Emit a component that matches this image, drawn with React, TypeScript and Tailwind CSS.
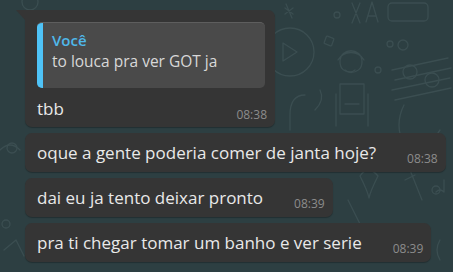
function Doodles() {
  return (
    <svg className="absolute inset-0 h-full w-full" viewBox="0 0 453 272" fill="none" stroke="#3b4e51" strokeWidth="1.3" strokeLinecap="round" strokeLinejoin="round">
      <circle cx="30" cy="2" r="8" />
      <path d="M285 8 l8 6 M293 8 l-8 6 M286 4 l6 14" />
      <circle cx="337" cy="15" r="3" />
      <path d="M352 3 l8 20 M360 3 l-8 20 M366 22 l6 -20 l6 20 M368 16 h8" />
      <rect x="388" y="3" width="40" height="18" rx="4" />
      <circle cx="290" cy="52" r="24" />
      <path d="M283 43 v18 l14 -9 z" />
      <rect x="325" y="37" width="8" height="8" rx="1" transform="rotate(20 329 41)" />
      <path d="M340 62 c0 -15 22 -15 22 0 c0 14 -22 14 -22 0 z M338 60 c6 -10 20 -10 26 0" />
      <path d="M345 70 q5 4 10 0 M336 94 v32 M368 94 v32 M340 84 h24 v30 h-24 z M345 104 h14" />
      <circle cx="390" cy="44" r="3" />
      <circle cx="403" cy="45" r="5" />
      <path d="M392 70 l56 -12 M395 80 l56 -12 M392 90 l58 -12 M395 100 l56 -12" />
      <circle cx="410" cy="72" r="7" />
      <circle cx="432" cy="80" r="7" />
      <circle cx="378" cy="70" r="3" />
      <path d="M404 105 q-10 20 0 40" />
      <path d="M305 95 q-15 0 -15 20 v15 M320 90 q5 10 -5 20" />
      <path d="M440 130 q-8 10 -2 25 M420 150 l-6 14 l10 -4" />
      <circle cx="436" cy="190" r="4" />
      <path d="M360 176 q8 -12 18 0 q-8 16 -9 22 q-1 -6 -9 -22 z M348 200 l20 40 M410 170 l12 30 M415 175 l-10 5 M444 180 v12 q-4 -4 -8 0 M0 150 q10 -10 20 0" />
      <circle cx="12" cy="148" r="5" />
      <circle cx="6" cy="224" r="4" />
      <path d="M4 250 l12 -10 l8 16 M440 240 q-6 10 0 20" />
    </svg>
  );
}

function Time({ t }: { t: string }) {
  return <span className="mb-[-3px] ml-auto shrink-0 pl-[31px] text-[12px] leading-[14px] text-[#8c8c8c]">{t}</span>;
}

function Bubble({ text, time }: { text: string; time: string }) {
  return (
    <div className="flex w-fit items-end rounded-[7px] bg-[#353535] py-[9px] pl-[12px] pr-[8px] shadow-[0_1px_1px_rgba(0,0,0,0.25)]">
      <span className="text-[17px] leading-[21px] text-[#e9e9e9]">{text}</span>
      <Time t={time} />
    </div>
  );
}

export default function App() {
  return (
    <div className="relative h-[272px] w-[453px] overflow-hidden bg-[#2d3f42]" style={{ fontFamily: '"Open Sans", "Noto Sans", sans-serif' }}>
      <Doodles />
      <div className="relative flex flex-col gap-[6px] pl-[25px] pt-[10px]">
        <div className="relative w-[250px] rounded-[7px] rounded-tl-none bg-[#353535] pb-[8px] pl-[12px] pr-[8px] pt-[12px] shadow-[0_1px_1px_rgba(0,0,0,0.25)]">
          <svg className="absolute left-[-9px] top-0" width="9" height="10" viewBox="0 0 9 10">
            <path d="M0 0 H9 V10 Z" fill="#353535" />
          </svg>
          <div className="mr-[2px] flex h-[66px] overflow-hidden rounded-[5px] border-t border-[#5e5e5e] bg-[#4a4a4a]">
            <div className="w-[6px] shrink-0 bg-[#4fc3f7]" />
            <div className="flex flex-col pl-[9px] pt-[7px]">
              <span className="text-[15px] font-semibold leading-[20px] text-[#4fb8ea]">Você</span>
              <span className="text-[15.5px] leading-[22px] text-[#d8d8d8]">to louca pra ver GOT ja</span>
            </div>
          </div>
          <div className="mt-[10px] flex items-end">
            <span className="text-[17px] leading-[21px] text-[#e9e9e9]">tbb</span>
            <Time t="08:38" />
          </div>
        </div>
        <Bubble text="oque a gente poderia comer de janta hoje?" time="08:38" />
        <Bubble text="dai eu ja tento deixar pronto" time="08:39" />
        <Bubble text="pra ti chegar tomar um banho e ver serie" time="08:39" />
      </div>
    </div>
  );
}
